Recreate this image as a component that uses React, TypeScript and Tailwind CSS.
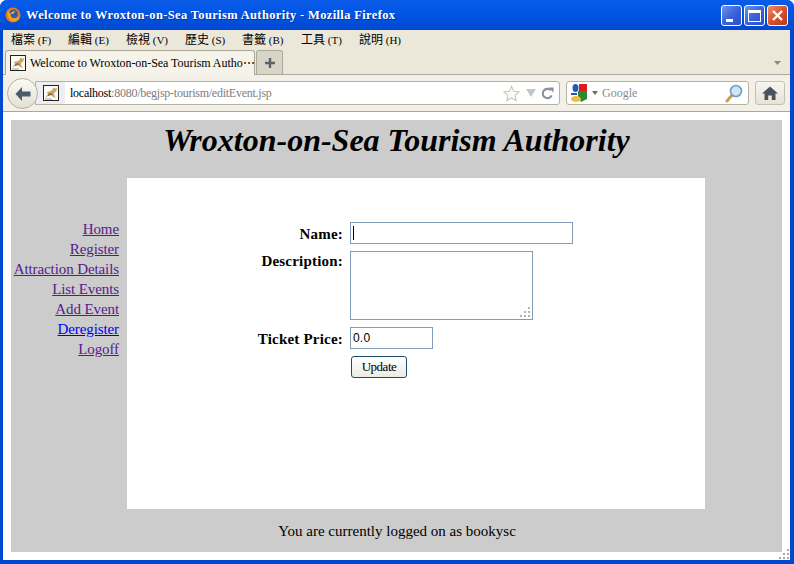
import React from 'react';

const links = ['Home', 'Register', 'Attraction Details', 'List Events', 'Add Event', 'Deregister', 'Logoff'];

const menus = [
  { label: '檔案', key: 'F', width: 'w-[57px]' },
  { label: '編輯', key: 'E', width: 'w-[58px]' },
  { label: '檢視', key: 'V', width: 'w-[59px]' },
  { label: '歷史', key: 'S', width: 'w-[57px]' },
  { label: '書籤', key: 'B', width: 'w-[59px]' },
  { label: '工具', key: 'T', width: 'w-[58px]' },
  { label: '說明', key: 'H', width: 'w-[42px]' },
];

const TomcatIcon: React.FC = () => (
  <svg width="16" height="16" viewBox="0 0 16 16" className="shrink-0">
    <rect x="0.5" y="0.5" width="15" height="15" fill="#fbfaf6" stroke="#222" />
    <path d="M2 13 L5 9 L4 7 L8 6 L10 4 L10 2.5 L12 3.5 L14 3 L13.5 6 L11 8 L11.5 11 L13 13 L10 12 L8 10 L5 11 Z" fill="#c8a868" />
    <path d="M5 9 L8 8 L10 10 L8 10 L5 11 Z" fill="#8a6f3c" />
    <path d="M2 14 H9" stroke="#9aa0a8" />
  </svg>
);

const FirefoxIcon: React.FC = () => (
  <svg width="16" height="16" viewBox="0 0 16 16" className="shrink-0">
    <circle cx="8" cy="8" r="7.5" fill="#e8761c" />
    <circle cx="8.5" cy="7" r="4.4" fill="#2f5f9e" />
    <path d="M3 3 C2 7 3 12 7 14 C11 15.5 15 12 15 8 C14 11 11 12 9 11.5 C6.5 11 5 9 6 6.5 C4.5 6.5 3.5 5 3 3 Z" fill="#f2a52a" />
    <path d="M6 6.5 C7 4.5 9 4 10.5 5 C9 5 8 6 8 7 Z" fill="#f6d04a" />
  </svg>
);

const WinButton: React.FC<{ kind: 'min' | 'max' | 'close' }> = ({ kind }) => (
  <div
    className={`w-[21px] h-[21px] rounded-[3px] border border-white flex items-center justify-center ${
      kind === 'close'
        ? 'bg-gradient-to-br from-[#e8906c] via-[#d9512c] to-[#b83a18]'
        : 'bg-gradient-to-br from-[#6f93ea] via-[#3a63d8] to-[#2a4fc8]'
    }`}
  >
    {kind === 'min' && <div className="w-[7px] h-[3px] bg-white mt-[9px] mr-[4px]" />}
    {kind === 'max' && <div className="w-[13px] h-[12px] border border-white border-t-[3px]" />}
    {kind === 'close' && (
      <svg width="13" height="13" viewBox="0 0 13 13">
        <path d="M2 2 L11 11 M11 2 L2 11" stroke="#fff" strokeWidth="2.4" />
      </svg>
    )}
  </div>
);

const BrowserChrome: React.FC = () => (
  <div className="shrink-0">
    <div className="h-[30px] flex items-center pl-[5px] pr-[6px] bg-gradient-to-b from-[#0a5ce8] via-[#0054e3] to-[#0148d0]">
      <FirefoxIcon />
      <span className="ml-[5px] text-white font-bold text-[12.5px] tracking-[0.35px] font-['Liberation_Serif',serif] [text-shadow:1px_1px_0_#0a2f9c] whitespace-nowrap">
        Welcome to Wroxton-on-Sea Tourism Authority - Mozilla Firefox
      </span>
      <div className="ml-auto flex gap-[2px] mt-[1px]">
        <WinButton kind="min" />
        <WinButton kind="max" />
        <WinButton kind="close" />
      </div>
    </div>

    <div className="ml-[3px] mr-[4px]">
      <div className="h-[18px] flex items-center pl-[8px] bg-[#ebe8da] text-[12px] text-black font-['Noto_Sans_CJK_TC',serif]">
        {menus.map((m) => (
          <span key={m.key} className={`${m.width} whitespace-nowrap shrink-0 leading-none`}>
            {m.label} <span className="font-['Liberation_Serif',serif] text-[11px]">({m.key})</span>
          </span>
        ))}
      </div>

      <div className="h-[27px] flex items-end pl-[2px] pr-[9px] bg-[#ebe8da] border-b border-[#aca899]">
        <div className="w-[250px] h-[25px] -mb-px flex items-center pl-[4px] bg-[#f5f3ea] border border-b-0 border-[#aca899] rounded-t-[3px] relative z-10">
          <TomcatIcon />
          <span className="ml-[4px] text-[12px] tracking-[-0.05px] text-black font-['Liberation_Serif',serif] whitespace-nowrap">
            Welcome to Wroxton-on-Sea Tourism Autho⋯
          </span>
        </div>
        <div className="w-[27px] h-[24px] ml-px flex items-center justify-center bg-[#d8d5c6] border border-b-0 border-[#aca899] rounded-t-[3px]">
          <svg width="12" height="12" viewBox="0 0 12 12">
            <path d="M6 1 V11 M1 6 H11" stroke="#59616b" strokeWidth="2.4" />
          </svg>
        </div>
        <svg width="7" height="4" viewBox="0 0 7 4" className="ml-auto mb-[9px]">
          <path d="M0 0 H7 L3.5 4 Z" fill="#8a8a80" />
        </svg>
      </div>

      <div className="h-[37px] relative flex items-center pl-[32px] pr-[5px] bg-[#f3f1e7] border-b border-[#aca899]">
        <div className="absolute left-[4px] top-[3px] w-[31px] h-[31px] rounded-full bg-gradient-to-b from-[#fbfaf5] to-[#e3e0d4] border border-[#b5b2a4] flex items-center justify-center z-10">
          <svg width="18" height="16" viewBox="0 0 18 16">
            <path d="M8 1 L1.5 8 L8 15 V10.5 H16.5 V5.5 H8 Z" fill="#4c5b6e" />
          </svg>
        </div>
        <div className="w-[525px] h-[24px] flex items-center bg-white border border-[#b5b2a4] rounded-r-[3px]">
          <div className="w-[29px] h-full shrink-0 flex items-center justify-end pr-[6px] bg-[#eceef4]">
            <TomcatIcon />
          </div>
          <span className="pl-[5px] text-[12px] text-black font-['Liberation_Serif',serif] tracking-[-0.25px] whitespace-nowrap">
            localhost<span className="text-[#7d7d7d]">:8080/begjsp-tourism/editEvent.jsp</span>
          </span>
          <div className="ml-auto flex items-center pr-[5px]">
            <svg width="17" height="17" viewBox="0 0 19 18">
              <path d="M9.5 1 L12 6.6 L18 7.2 L13.5 11.2 L14.8 17 L9.5 14 L4.2 17 L5.5 11.2 L1 7.2 L7 6.6 Z" fill="#fbfbf8" stroke="#c4c6c2" strokeWidth="1.2" />
            </svg>
            <svg width="10" height="8" viewBox="0 0 10 8" className="ml-[6px]">
              <path d="M0 0 H10 L5 8 Z" fill="#c2c6cb" />
            </svg>
            <svg width="13" height="13" viewBox="0 0 14 14" className="ml-[5px]">
              <path d="M11.5 9 A5 5 0 1 1 10.5 3.5" fill="none" stroke="#84909c" strokeWidth="2.2" />
              <path d="M8 0.5 H13.5 V6 Z" fill="#84909c" />
            </svg>
          </div>
        </div>
        <div className="w-[183px] h-[24px] ml-[6px] flex items-center pl-[4px] pr-[3px] bg-white border border-[#b5b2a4] rounded-[3px]">
          <svg width="17" height="18" viewBox="0 0 17 18" className="shrink-0">
            <rect x="8" y="0" width="8" height="7" fill="#d81e1e" />
            <path d="M7 7 H16 V15 L10 18 L7 12 Z" fill="#2a8c2e" />
            <ellipse cx="4.5" cy="4" rx="3" ry="4" fill="#2458b8" />
            <rect x="0" y="9" width="6" height="2" fill="#2458b8" />
            <ellipse cx="5" cy="15" rx="5" ry="3" fill="#efc03a" />
          </svg>
          <svg width="6" height="4" viewBox="0 0 6 4" className="ml-[4px] shrink-0">
            <path d="M0 0 H6 L3 4 Z" fill="#6c6c6c" />
          </svg>
          <span className="ml-[4px] text-[12px] text-[#8c8c8c] font-['Liberation_Serif',serif]">Google</span>
          <svg width="18" height="19" viewBox="0 0 18 19" className="ml-auto mr-[2px]">
            <path d="M7.5 10.5 L2 17" stroke="#d09a5c" strokeWidth="3" strokeLinecap="round" />
            <circle cx="11" cy="7" r="5.5" fill="#cfe4f5" stroke="#6d9cc4" strokeWidth="1.6" />
          </svg>
        </div>
        <div className="w-[30px] h-[24px] ml-[6px] flex items-center justify-center bg-gradient-to-b from-[#f7f6ef] to-[#e6e3d6] border border-[#c4c1b3] rounded-[3px]">
          <svg width="16" height="14" viewBox="0 0 16 14">
            <path d="M8 0.5 L16 7.5 H13.5 V14 H9.8 V9.5 H6.2 V14 H2.5 V7.5 H0 Z" fill="#47535f" />
          </svg>
        </div>
      </div>
    </div>
  </div>
);

const fieldClass =
  "block border border-[#7f9db9] bg-white px-[2px] text-[12px] text-black font-['Liberation_Sans',sans-serif] font-normal outline-none";

const EditEventForm: React.FC = () => (
  <div className="grid grid-cols-[216px_auto] gap-x-[7px] justify-start pt-[44px] text-[15px] tracking-[0.2px] font-bold">
    <label className="text-right leading-[22px] mt-[1px]">Name:</label>
    <div className="relative w-[223px] h-[22px] mb-[7px]">
      <input className={`${fieldClass} w-full h-full`} defaultValue="" />
      <div className="absolute left-[3px] top-[4px] w-px h-[14px] bg-black" />
    </div>
    <label className="text-right leading-[20px]">Description:</label>
    <div className="relative w-[183px] h-[69px] mb-[7px]">
      <textarea className={`${fieldClass} w-full h-full resize-none`} defaultValue="" />
      <svg width="12" height="12" viewBox="0 0 12 12" className="absolute right-[2px] bottom-[2px]">
        <path d="M9 1h2v2H9z M5 5h2v2H5z M9 5h2v2H9z M1 9h2v2H1z M5 9h2v2H5z M9 9h2v2H9z" fill="#b4b4b4" />
      </svg>
    </div>
    <label className="text-right leading-[22px] mt-[1px]">Ticket Price:</label>
    <input className={`${fieldClass} w-[83px] h-[22px] mb-[7px]`} defaultValue="0.0" />
    <div />
    <button className="w-[56px] h-[22px] ml-px rounded-[3px] border border-[#1c4e6e] bg-gradient-to-b from-[#ffffff] to-[#ecebe4] text-[13px] font-normal text-black tracking-[-0.5px]">
      Update
    </button>
  </div>
);

const App: React.FC = () => {
  return (
    <div className="relative w-[794px] h-[564px] overflow-hidden bg-[#0148d0] rounded-t-[7px] flex flex-col font-['Liberation_Serif',serif]">
      <BrowserChrome />
      <div className="flex-1 min-h-0 ml-[3px] mr-[4px] mb-[4px] bg-white p-[8px]">
        <div className="h-full bg-[#cccccc] flex flex-col text-black">
          <h1 className="h-[58px] shrink-0 pt-[1px] text-center text-[32px] leading-[38px] font-bold italic">
            Wroxton-on-Sea Tourism Authority
          </h1>
          <div className="h-[331px] shrink-0 flex">
            <nav className="w-[116px] shrink-0 pr-[8px] pt-[41px] flex flex-col items-end text-[15px] leading-[20px] tracking-[-0.1px]">
              {links.map((l) => (
                <a
                  key={l}
                  href="#"
                  className={`underline whitespace-nowrap ${l === 'Deregister' ? 'text-[#0000ee]' : 'text-[#551a8b]'}`}
                >
                  {l}
                </a>
              ))}
            </nav>
            <main className="w-[578px] shrink-0 bg-white">
              <EditEventForm />
            </main>
          </div>
          <p className="pt-[12px] text-center text-[15px] leading-[20px] pl-[1px]">You are currently logged on as bookysc</p>
        </div>
      </div>
      <svg width="12" height="12" viewBox="0 0 12 12" className="absolute right-[4px] bottom-[4px]">
        <path d="M9 1h2v2H9z M5 5h2v2H5z M9 5h2v2H9z M1 9h2v2H1z M5 9h2v2H5z M9 9h2v2H9z" fill="#a8a8a8" />
      </svg>
    </div>
  );
};

export default App;
